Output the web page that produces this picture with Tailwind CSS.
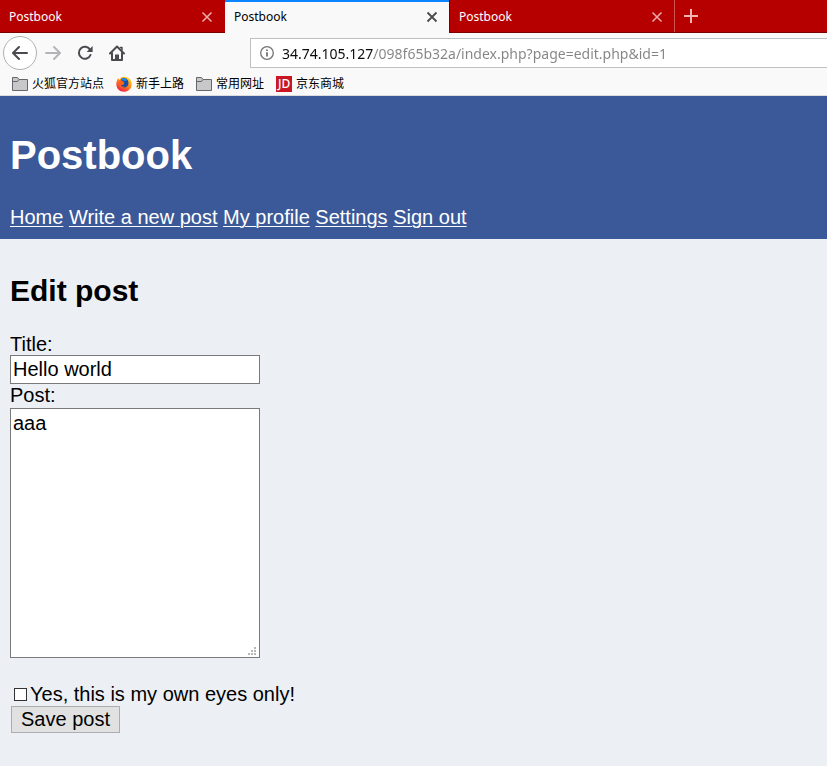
<!DOCTYPE html>
<html lang="en">
<head>
<meta charset="utf-8">
<meta name="viewport" content="width=device-width, initial-scale=1">
<title>Postbook</title>
<script src="https://cdn.jsdelivr.net/npm/@tailwindcss/browser@4"></script>
</head>
<body class="flex min-h-screen flex-col bg-[#ecf0f5] font-['Liberation_Sans',Arial,sans-serif] text-xl leading-[23px] text-black">

<div class="bg-[#f9f9fa] font-['Noto_Sans','Noto_Sans_CJK_SC',sans-serif] text-xs">
  <div class="flex h-[33px] bg-[#b60000] text-white" role="tablist">
    <div class="flex w-[225px] items-center justify-between border-b border-[#7c0000] pt-px pl-[9px] pr-3" role="tab">
      <span>Postbook</span>
      <button type="button" aria-label="Close tab" class="text-[#eba9a9]"><svg class="size-3" viewBox="0 0 12 12" fill="none" stroke="currentColor" stroke-width="1.6"><path d="M1.500 1.500l9 9M10.500 1.500l-9 9"/></svg></button>
    </div>
    <div class="flex w-[224px] items-center justify-between border-t-2 border-[#0a84ff] bg-[#f9f9fa] pb-[2px] pl-[9px] pr-[11px] text-black" role="tab" aria-selected="true">
      <span>Postbook</span>
      <button type="button" aria-label="Close tab" class="text-[#4a4a4f]"><svg class="size-3" viewBox="0 0 12 12" fill="none" stroke="currentColor" stroke-width="1.8"><path d="M1.500 1.500l9 9M10.500 1.500l-9 9"/></svg></button>
    </div>
    <div class="flex w-[225px] items-center justify-between border-b border-l border-[#7c0000] pt-px pl-[9px] pr-[11px]" role="tab">
      <span>Postbook</span>
      <button type="button" aria-label="Close tab" class="text-[#eba9a9]"><svg class="size-3" viewBox="0 0 12 12" fill="none" stroke="currentColor" stroke-width="1.6"><path d="M1.500 1.500l9 9M10.500 1.500l-9 9"/></svg></button>
    </div>
    <div class="flex flex-1 items-center border-b border-[#7c0000]">
      <span class="h-full w-px bg-[#cf5555]"></span>
      <button type="button" aria-label="New tab" class="ml-2 text-[#f0b5b5]"><svg class="size-4" viewBox="0 0 16 16" fill="none" stroke="currentColor" stroke-width="2"><path d="M8 1v14M1 8h14"/></svg></button>
    </div>
  </div>

  <div class="flex h-10 items-center">
    <div class="flex w-[250px] shrink-0 items-center pl-[3px]">
      <button type="button" aria-label="Back" class="flex size-[34px] items-center justify-center rounded-full border border-[#b1b1b1] bg-white text-[#4a4a4f]"><svg class="size-4" viewBox="0 0 16 16" fill="none" stroke="currentColor" stroke-width="2" stroke-linecap="round" stroke-linejoin="round"><path d="M15 8H1.500M7 2L1 8l6 6"/></svg></button>
      <button type="button" aria-label="Forward" class="ml-2 flex size-4 text-[#b5b5b7]"><svg class="size-4" viewBox="0 0 16 16" fill="none" stroke="currentColor" stroke-width="2" stroke-linecap="round" stroke-linejoin="round"><path d="M1 8h13.500M9 2l6 6-6 6"/></svg></button>
      <button type="button" aria-label="Reload" class="ml-4 flex size-4 text-[#4a4a4f]"><svg class="size-4" viewBox="0 0 16 16" fill="none" stroke="currentColor" stroke-width="2" stroke-linecap="round"><path d="M13 4.600A6 6 0 1 0 13.500 10"/><path d="M15.600 1v6H9.600z" fill="currentColor" stroke="none"/></svg></button>
      <button type="button" aria-label="Home" class="ml-4 flex size-4 text-[#4a4a4f]"><svg class="size-4" viewBox="0 0 16 16" fill="none" stroke="currentColor" stroke-width="2" stroke-linecap="round" stroke-linejoin="round"><path d="M1 8.500L8 1.500l7 7M3 8v7h10V8"/><path d="M6 14V9.500h4V14z" fill="currentColor" stroke="none"/><path d="M11.500 2.500h1.500V5" stroke-width="1.500"/></svg></button>
    </div>
    <div class="flex h-[30px] min-w-0 flex-1 items-center gap-2 border border-r-0 border-[#c0c0c3] bg-white pl-[9px]">
      <svg class="size-[14px] shrink-0 text-[#737373]" viewBox="0 0 14 14" fill="none" stroke="currentColor"><circle cx="7" cy="7" r="6.300" stroke-width="1.300"/><path d="M7 6.200v4.300M7 3.500v1.500" stroke-width="1.800"/></svg>
      <input type="text" aria-label="Address" value="34.74.105.127/098f65b32a/index.php?page=edit.php&amp;id=1" class="h-7 min-w-0 flex-1 bg-[linear-gradient(90deg,#0c0c0d_92px,#848484_92px)] bg-clip-text font-['Noto_Sans',sans-serif] text-sm text-transparent caret-black outline-none">
    </div>
  </div>

  <div class="flex h-[23px] items-center gap-3 border-b border-[#dcdcde] pl-3 text-black">
    <a href="#" class="flex items-center gap-1"><svg class="size-4" viewBox="0 0 16 16" fill="#c8c8ca" stroke="#66666a"><path d="M.5 14.500v-13h5l1.500 2h8.500v11z"/><path d="M.5 5.500h5l1.500-2" fill="none"/></svg>火狐官方站点</a>
    <a href="#" class="flex items-center gap-1"><svg class="size-4" viewBox="0 0 16 16"><defs><linearGradient id="flame" x1=".85" y1="0" x2=".2" y2="1"><stop offset="0" stop-color="#ffe226"/><stop offset=".45" stop-color="#ff8a16"/><stop offset="1" stop-color="#f0134f"/></linearGradient></defs><path d="M2 2.200l1.600 1.700L5 1.500 6.500 1C12 0 16 4 15.700 8.700 15.300 13 12 15.700 8 15.700 3.500 15.700.3 12.500.3 8 .3 5.500 1.300 4 2 2.200z" fill="url(#flame)"/><path d="M5.500 2.800C8 .8 11.500 2.500 12.300 5.500c.9 3.400-1.300 6-4.200 6-2 0-3.600-1.300-3.800-3l2.500.4 1.600-1.400-2.600-.8-.8-1.700z" fill="#174ea6"/><path d="M6 2.500c2-.8 4.300.2 5 2L8.500 5 6 4z" fill="#168ee8"/><path d="M3.500 4l2.300.6 2.500 2-1.500 1.800-2 .4c.6 1.800 2.500 2.300 4.200 1.500C7.500 12.500 3.800 12 3 9z" fill="#ff611c"/></svg>新手上路</a>
    <a href="#" class="flex items-center gap-1"><svg class="size-4" viewBox="0 0 16 16" fill="#c8c8ca" stroke="#66666a"><path d="M.5 14.500v-13h5l1.500 2h8.500v11z"/><path d="M.5 5.500h5l1.500-2" fill="none"/></svg>常用网址</a>
    <a href="#" class="flex items-center gap-1"><span class="flex size-4 items-center justify-center bg-[#c81623] text-xs leading-4 font-medium text-white">JD</span>京东商城</a>
  </div>
</div>

<header class="bg-[#3b5998] p-[10px] text-white">
  <h1 class="mt-[26px] mb-7 text-[40px] leading-[46px] font-bold">Postbook</h1>
  <nav>
    <a href="#" class="underline decoration-1 underline-offset-2">Home</a>
    <a href="#" class="underline decoration-1 underline-offset-2">Write a new post</a>
    <a href="#" class="underline decoration-1 underline-offset-2">My profile</a>
    <a href="#" class="underline decoration-1 underline-offset-2">Settings</a>
    <a href="#" class="underline decoration-1 underline-offset-2">Sign out</a>
  </nav>
</header>

<main class="p-[10px]">
  <h2 class="my-[25px] text-3xl leading-[34px] font-bold">Edit post</h2>
  <form class="flex flex-col items-start">
    <label for="title" class="leading-[22px]">Title:</label>
    <input id="title" type="text" value="Hello world" class="h-[29px] w-[250px] border border-[#7a7a7a] bg-white px-[2px]">
    <label for="post" class="mb-px">Post:</label>
    <div class="relative">
      <textarea id="post" class="block h-[250px] w-[250px] resize-none border border-[#7a7a7a] bg-white px-[2px] pt-[3px]">aaa</textarea>
      <svg class="pointer-events-none absolute right-1 bottom-[3px] h-2 w-2" viewBox="0 0 8 8" fill="#b8b8b8" shape-rendering="crispEdges"><path d="M6 0h2v2H6zM6 3h2v2H6zM3 3h2v2H3zM6 6h2v2H6zM3 6h2v2H3zM0 6h2v2H0z"/></svg>
    </div>
    <div class="mt-[25px] flex items-center gap-[3px] pl-1">
      <input id="private" type="checkbox" class="size-[13px] appearance-none border border-[#333] bg-white checked:bg-[#333]">
      <label for="private">Yes, this is my own eyes only!</label>
    </div>
    <button type="submit" class="ml-px h-[27px] border border-[#adadad] bg-[#e1e1e1] px-[9px]">Save post</button>
  </form>
</main>
</body>
</html>
